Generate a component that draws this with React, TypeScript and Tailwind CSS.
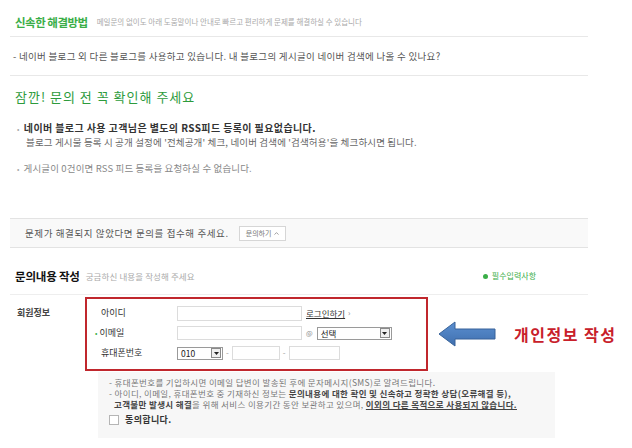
import React from 'react';

const Dropdown = () => (
  <span className="flex h-[10px] w-[10px] items-center justify-center border border-[#8a8a8a] bg-[#efefef]">
    <svg width="5" height="3" viewBox="0 0 5 3">
      <path d="M0 0h5L2.5 3z" fill="#222" />
    </svg>
  </span>
);

const Select = ({ value, width }: { value: string; width: string }) => (
  <div className={`flex h-[13px] items-center justify-between border border-[#9a9a9a] bg-white pl-[3px] pr-[1px] ${width}`}>
    <span className="text-[8.5px] leading-none text-[#222]">{value}</span>
    <Dropdown />
  </div>
);

const Bullet = () => <span className="mr-[4px] text-[7px] font-normal text-[#aaa]">•</span>;

export default function App() {
  return (
    <div className="h-[448px] w-[632px] overflow-hidden bg-white font-['Noto_Sans_CJK_KR','Noto_Sans',sans-serif] text-[#555]">
      <div className="ml-[10px] w-[578px]">
        {/* 신속한 해결방법 */}
        <div className="flex h-[37px] items-center gap-[9px] border-b border-[#e8e8e8] pl-[5px] pt-[8px]">
          <h2 className="text-[11.5px] font-bold leading-[14px] tracking-[-0.5px] text-[#3aae47]">신속한 해결방법</h2>
          <span className="text-[7.5px] leading-[10px] text-[#aaa]">
            메일문의 없이도 아래 도움말이나 안내로 빠르고 편리하게 문제를 해결하실 수 있습니다
          </span>
        </div>
        <div className="flex h-[39px] items-center border-b border-[#e8e8e8] pl-[3px] text-[9.5px] leading-[12px] tracking-[0.3px] text-[#555]">
          - 네이버 블로그 외 다른 블로그를 사용하고 있습니다. 내 블로그의 게시글이 네이버 검색에 나올 수 있나요?
        </div>

        {/* 잠깐! */}
        <h2 className="mt-[14px] pl-[5px] text-[13px] leading-[14px] tracking-[1px] text-[#2d9b3c]">
          잠깐! 문의 전 꼭 확인해 주세요
        </h2>
        <div className="mt-[17px] pl-[7px]">
          <p className="h-[14px] text-[10px] font-bold leading-[14px] tracking-[0.4px] text-[#333]">
            <Bullet />
            네이버 블로그 사용 고객님은 별도의 RSS피드 등록이 필요없습니다.
          </p>
          <p className="h-[14px] pl-[9px] text-[9.5px] leading-[14px] tracking-[0.15px] text-[#666]">
            블로그 게시물 등록 시 공개 설정에 '전체공개' 체크, 네이버 검색에 '검색허용'을 체크하시면 됩니다.
          </p>
          <p className="mt-[12px] h-[14px] text-[9.5px] leading-[14px] tracking-[0.15px] text-[#888]">
            <Bullet />
            게시글이 0건이면 RSS 피드 등록을 요청하실 수 없습니다.
          </p>
        </div>

        {/* 문의하기 */}
        <div className="mt-[43px] flex h-[30px] items-center gap-[10px] border-y border-[#e3e3e3] bg-[#f9f9f9] pl-[15px]">
          <span className="text-[9.5px] leading-[12px] tracking-[0.6px] text-[#555]">
            문제가 해결되지 않았다면 문의를 접수해 주세요.
          </span>
          <button className="flex h-[15px] items-center gap-[3px] border border-[#d6d6d6] bg-white px-[6px] text-[7px] leading-none text-[#777]">
            문의하기
            <svg width="5" height="3" viewBox="0 0 5 3">
              <path d="M0.5 2.6L2.5 0.6L4.5 2.6" fill="none" stroke="#888" strokeWidth="0.8" />
            </svg>
          </button>
        </div>

        {/* 문의내용 작성 */}
        <div className="mt-[14px] flex h-[33px] items-start justify-between border-b border-[#eeeeee] pl-[5px] pr-[52px] pt-[6px]">
          <div className="flex items-center gap-[6px]">
            <h2 className="text-[11.5px] font-bold leading-[16px] tracking-[-0.2px] text-[#111]">문의내용 작성</h2>
            <span className="text-[8.5px] leading-[12px] tracking-[0.1px] text-[#aaa]">궁금하신 내용을 작성해 주세요</span>
          </div>
          <span className="flex items-center gap-[4px] pt-[2px] text-[8px] leading-[12px] text-[#3aae47]">
            <span className="h-[5px] w-[5px] rounded-full bg-[#3aae47]" />
            필수입력사항
          </span>
        </div>

        {/* 회원정보 */}
        <div className="mt-[2px] flex items-center">
          <div className="w-[75px] shrink-0 self-start pl-[7px] pt-[10px] text-[9px] font-bold leading-[12px] text-[#444]">
            회원정보
          </div>
          <div className="h-[74px] w-[343px] shrink-0 border-2 border-[#c0272d] pl-[14px] pt-[4px] text-[9px] text-[#333]">
            <div className="flex h-[20px] items-center">
              <span className="w-[76px]">아이디</span>
              <span className="h-[15px] w-[125px] border border-[#dcdcdc] bg-white" />
              <span className="ml-[4px] text-[8.5px] text-[#333] underline">로그인하기</span>
              <span className="ml-[3px] text-[8px] text-[#888]">›</span>
            </div>
            <div className="flex h-[20px] items-center">
              <span className="w-[76px]">
                <span className="-ml-[6px] mr-[2px] text-[7px] text-[#3aae47]">•</span>
                이메일
              </span>
              <span className="h-[14px] w-[125px] border border-[#dcdcdc] bg-white" />
              <span className="ml-[4px] text-[7px] text-[#888]">@</span>
              <div className="ml-[4px]">
                <Select value="선택" width="w-[75px]" />
              </div>
            </div>
            <div className="flex h-[20px] items-center">
              <span className="w-[76px]">휴대폰번호</span>
              <Select value="010" width="w-[46px]" />
              <span className="mx-[3px] text-[8px] text-[#999]">-</span>
              <span className="h-[14px] w-[48px] border border-[#dcdcdc] bg-white" />
              <span className="mx-[3px] text-[8px] text-[#999]">-</span>
              <span className="h-[14px] w-[51px] border border-[#dcdcdc] bg-white" />
            </div>
          </div>
          <svg className="ml-[10px] shrink-0" width="58" height="26" viewBox="0 0 58 26">
            <defs>
              <linearGradient id="arrowFill" x1="0" y1="0" x2="0" y2="1">
                <stop offset="0" stopColor="#5b8fd0" />
                <stop offset="1" stopColor="#3f6fae" />
              </linearGradient>
            </defs>
            <path d="M1 13L17 1V8H57V18H17V25Z" fill="url(#arrowFill)" stroke="#38639a" strokeWidth="1" />
          </svg>
          <span className="ml-[18px] shrink-0 whitespace-nowrap text-[16px] font-bold leading-[18px] tracking-[1.5px] text-[#c8202a]">
            개인정보 작성
          </span>
        </div>

        {/* 안내 */}
        <div className="ml-[88px] mt-[1px] h-[66px] w-[457px] bg-[#f7f7f7] pl-[11px] pt-[5px] text-[8.5px] leading-[11px] tracking-[0.35px] text-[#777]">
          <p>- 휴대폰번호를 기입하시면 이메일 답변이 발송된 후에 문자메시지(SMS)로 알려드립니다.</p>
          <p>
            - 아이디, 이메일, 휴대폰번호 중 기재하신 정보는{' '}
            <b className="text-[#444]">문의내용에 대한 확인 및 신속하고 정확한 상담(오류해결 등),</b>
          </p>
          <p className="pl-[5px]">
            <b className="text-[#444]">고객불만 발생시 해결</b>을 위해 서비스 이용기간 동안 보관하고 있으며,{' '}
            <b className="text-[#444] underline">이외의 다른 목적으로 사용되지 않습니다.</b>
          </p>
          <label className="mt-[4px] flex items-center gap-[6px]">
            <span className="h-[10px] w-[10px] border border-[#b5b5b5] bg-white" />
            <span className="text-[9px] font-bold leading-[12px] text-[#333]">동의합니다.</span>
          </label>
        </div>
      </div>
    </div>
  );
}
